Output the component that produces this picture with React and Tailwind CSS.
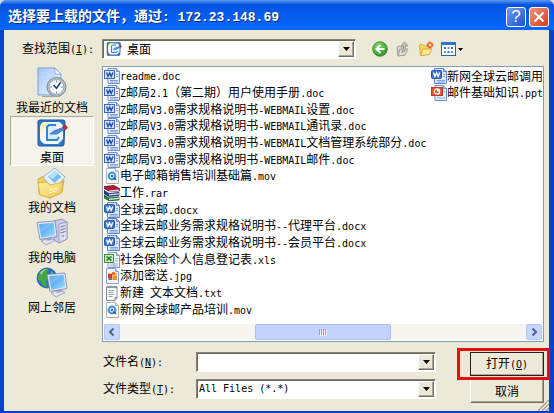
import React from "react";

/* ---------- text ---------- */

// Chinese glyphs are set at 12px and Latin ones at 10px, so that one is twice as wide as the other.
function Mixed({ text, latin = "font-['DejaVu_Sans_Mono',monospace] text-[10px]" }) {
  return text.split(/([\x20-\x7e]+)/).map((part, i) =>
    i % 2 ? (
      <span key={i} className={latin}>
        {part}
      </span>
    ) : (
      part
    )
  );
}

function Hotkey({ text, letter, colon }) {
  return (
    <>
      {text}
      <span className="font-['DejaVu_Sans_Mono',monospace] text-[10px]">
        (<u className="underline-offset-1">{letter}</u>){colon ? ":" : ""}
      </span>
    </>
  );
}

/* ---------- file icons ---------- */

function DocIcon() {
  return (
    <svg width="16" height="16" viewBox="0 0 16 16" aria-hidden="true">
      <path d="M4 .5h8.5l3 3v12H4z" fill="#e8f0fd" stroke="#6f8fd0" />
      <path d="M12.5.5v3h3" fill="#b9cdf2" stroke="#6f8fd0" />
      <path d="M12 6.5h2M12 8.5h2M6 12.5h8M6 14h8" stroke="#7f9fdc" />
      <rect x=".5" y="2.5" width="10" height="8" fill="#d5e4fb" stroke="#3f66b8" />
      <path d="M2.5 4.5l1.5 4 1.7-3.6 1.5 3.6 1.8-4" fill="none" stroke="#1f4fae" strokeWidth="1.4" />
    </svg>
  );
}

function DocxIcon() {
  return (
    <svg width="16" height="16" viewBox="0 0 16 16" aria-hidden="true">
      <path d="M3.5.5h9l3 3v12h-12z" fill="#dbe8fb" stroke="#5c83cc" />
      <path d="M12.5.5v3h3" fill="#a8c3ef" stroke="#5c83cc" />
      <path d="M6 12.5h8M6 14h8M12 6.5h2M12 8.5h2" stroke="#7ea2e0" />
      <rect x=".5" y="2.5" width="10" height="8" rx="1" fill="#3f73c9" stroke="#2d58a8" />
      <path d="M2.5 4.5l1.4 4 1.7-3.8 1.6 3.8 1.5-4" fill="none" stroke="#fff" strokeWidth="1.3" />
    </svg>
  );
}

function XlsIcon() {
  return (
    <svg width="16" height="16" viewBox="0 0 16 16" aria-hidden="true">
      <path d="M4 .5h8.5l3 3v12H4z" fill="#eef5fb" stroke="#7f9cc8" />
      <path d="M12.5.5v3h3" fill="#c4d6ee" stroke="#7f9cc8" />
      <path d="M11 6.5h3M11 9h3M6 12h8M6 14h8M10 11v4" stroke="#9ab5d8" />
      <rect x=".5" y="2.5" width="9" height="8" fill="#d4efcb" stroke="#3a8f35" />
      <path d="M2.5 4.3l5 4.4M7.5 4.3l-5 4.4" stroke="#2b8526" strokeWidth="1.6" />
    </svg>
  );
}

function PptIcon() {
  return (
    <svg width="16" height="16" viewBox="0 0 16 16" aria-hidden="true">
      <path d="M4 .5h8.5l3 3v12H4z" fill="#e6eefb" stroke="#6f8fd0" />
      <path d="M12.5.5v3h3" fill="#b9cdf2" stroke="#6f8fd0" />
      <path d="M12.5 6.5H14M6 13h8" stroke="#8ba8dd" />
      <rect x=".5" y="2.5" width="11" height="8" fill="#e2533a" stroke="#c03a28" />
      <circle cx="6" cy="6.5" r="2.6" fill="none" stroke="#fff" strokeWidth="1.3" />
      <path d="M6 6.5V4h2.5v2.5z" fill="#fff" />
    </svg>
  );
}

function MovIcon() {
  return (
    <svg width="16" height="16" viewBox="0 0 16 16" aria-hidden="true">
      <path d="M2.5.5h9l3 3v12h-12z" fill="#fbfbf8" stroke="#b3b3ab" />
      <path d="M11.5.5v3h3" fill="#ddd" stroke="#b3b3ab" />
      <circle cx="8" cy="8" r="3.4" fill="#d8efff" stroke="#3c8fdc" strokeWidth="2" />
      <circle cx="8" cy="8" r="1.2" fill="#2564b4" />
      <path d="M9.5 9.5l2.5 2.3" stroke="#2564b4" strokeWidth="1.8" />
      <path d="M3 15.5h11.5" stroke="#cf9a83" />
    </svg>
  );
}

function RarIcon() {
  return (
    <svg width="16" height="16" viewBox="0 0 16 16" aria-hidden="true">
      <path d="M0 1.500l10-1 5.500 3v2.500l-10 .5L0 3.500z" fill="#a81c3c" stroke="#541024" strokeWidth=".7" />
      <path d="M5 5.500l10-1v1.300L5 6.700z" fill="#f3dfe4" />
      <path d="M0 5.500l5 3 10-1v3l-10 1-5-3z" fill="#243f9c" stroke="#101c48" strokeWidth=".7" />
      <path d="M5 9.300l10-1v1.200l-10 1z" fill="#dfe6fa" />
      <path d="M0 10l5 3 10-1v3l-10 .8-5-3z" fill="#23863a" stroke="#0e3c17" strokeWidth=".7" />
      <path d="M5 13.700l10-1v1.200l-10 1z" fill="#dcf3df" />
    </svg>
  );
}

function JpgIcon() {
  return (
    <svg width="16" height="16" viewBox="0 0 16 16" aria-hidden="true">
      <path d="M2.5.5h9l3 3v12h-12z" fill="#f4f7fd" stroke="#8ba3cf" />
      <path d="M11.5.5v3h3" fill="#cbd8ee" stroke="#8ba3cf" />
      <rect x="4" y="5" width="9" height="7" fill="#f4b183" />
      <rect x="4" y="6" width="4" height="4" fill="#d23a22" />
      <rect x="8" y="4" width="3" height="3" fill="#e8742c" />
      <rect x="9" y="8" width="4" height="4" fill="#f0912e" />
      <rect x="5" y="10" width="3" height="2" fill="#4b78c8" />
    </svg>
  );
}

function TxtIcon() {
  return (
    <svg width="16" height="16" viewBox="0 0 16 16" aria-hidden="true">
      <path d="M2.5 2H13v11l-2 2.5H2.5z" fill="#fdfdfb" stroke="#7d8794" />
      <path d="M4 .8v2.4M6 .8v2.4M8 .8v2.4M10 .8v2.4M12 .8v2.4" stroke="#5b6571" strokeWidth=".9" />
      <path d="M4.5 5.5h6M4.5 7.5h5M4.5 9.5h6M4.5 11.5h4" stroke="#8fa0b6" />
      <path d="M11 15v-2.5h2" fill="#ccd" stroke="#7d8794" />
    </svg>
  );
}

/* ---------- large place icons ---------- */

function Screen({ x, y }) {
  return (
    <g transform={`translate(${x} ${y})`}>
      <path d="M4 20l9-3.5 5 3-9 4.500z" fill="#e4e4f2" stroke="#8686b0" strokeWidth=".7" />
      <path d="M8 16l6-1 1 4-5 1z" fill="#a3a4cc" />
      <path d="M0 1.500L18 0l2 15.500L3 18.500z" fill="#e4e8f6" stroke="#7783b4" strokeWidth=".8" />
      <path d="M2 3.200L16.500 1.800l1.700 12.500L4.300 16.800z" fill="url(#screenGlow)" />
      <path d="M2 3.200L16.500 1.800 3.500 12z" fill="#fff" opacity=".2" />
    </g>
  );
}

function RecentIcon() {
  return (
    <svg width="32" height="32" viewBox="0 0 32 32" aria-hidden="true">
      <path d="M2 1h17l6 6v21H2z" fill="url(#paper)" stroke="#7d9fd8" />
      <path d="M19 1v6h6z" fill="#fff" stroke="#7d9fd8" strokeWidth=".8" />
      <path d="M5 6h9M5 10h7M5 14h5" stroke="#c3d8f8" />
      <circle cx="20.5" cy="20" r="9.5" fill="#b8bfc9" stroke="#7c8591" />
      <circle cx="20.5" cy="20" r="7.3" fill="#f6fbff" stroke="#8c97a5" strokeWidth=".7" />
      <path d="M20.5 13.5v2M20.5 24.5v2M14 20h2M25 20h2" stroke="#7387a2" />
      <path d="M17.5 18l3 3.2 4.2-6" fill="none" stroke="#243b66" strokeWidth="1.5" />
      <path d="M6 29.5h18" stroke="#a9a796" />
    </svg>
  );
}

function DesktopIcon({ size = 32 }) {
  return (
    <svg width={size} height={size} viewBox="0 0 32 32" aria-hidden="true">
      <path d="M4 3h23q2 0 2 2l-1 22q0 2-2 2H4q-2 0-2-2L2 5q0-2 2-2z" fill="#2c78c8" stroke="#1b559e" />
      <path d="M8 5h15q4 2 4 5v12l-5 5H9q-5-2-5-6V10q1-4 4-5z" fill="#f5f8fa" />
      <path d="M8 5h8L4 17v-7q1-4 4-5z" fill="#fdf3c4" />
      <path d="M20 8h-7l-2 2v13h10l2-3" fill="#d8edff" stroke="#2d86d8" strokeWidth="2" />
      <path d="M14 17l4-3 10-4 1.5 2-9 5z" fill="#4f94d8" stroke="#255b9e" strokeWidth=".7" />
      <path d="M27 9.5l3-1 1.5 2.5-3 2z" fill="#c62f2b" stroke="#8c1a18" strokeWidth=".6" />
    </svg>
  );
}

function DocumentsIcon() {
  return (
    <svg width="32" height="32" viewBox="0 0 32 32" aria-hidden="true">
      <path d="M2 12l6-3 4 3 16 1-2 12-12 6-11-4z" fill="#f3cf58" stroke="#cda134" strokeWidth=".8" />
      <path d="M7 10L19 1l10 9-11 13z" fill="#e3f2ff" stroke="#7fa9d6" strokeWidth=".8" />
      <path d="M12 9.500l7-5.500 6.500 6-7 6z" fill="#7dbcec" />
      <path d="M12 9.500l7-5.500 3 2.800-5 5z" fill="#b8e0fa" />
      <path d="M2 16l9-1 3 3 13-3-2 11-11 5-10-3z" fill="url(#folder)" stroke="#d6aa3a" strokeWidth=".8" />
      <path d="M13 23l9-2M13 26l8-2.500" stroke="#fffbe0" />
    </svg>
  );
}

function ComputerIcon() {
  return (
    <svg width="32" height="32" viewBox="0 0 32 32" aria-hidden="true">
      <path d="M18 4l8-2 5 3v17l-8 4-5-3z" fill="#c9c9e4" stroke="#8383b0" strokeWidth=".8" />
      <path d="M23 7l8-2v17l-8 4z" fill="#dedef0" stroke="#8f8fba" strokeWidth=".8" />
      <path d="M24.5 10l5-1.500M24.5 13l5-1.500M24.5 16l5-1.500" stroke="#7272a6" />
      <circle cx="27" cy="19" r="1" fill="#58b158" />
      <Screen x={1} y={4} />
    </svg>
  );
}

function NetworkIcon() {
  return (
    <svg width="32" height="32" viewBox="0 0 32 32" aria-hidden="true">
      <circle cx="11" cy="11" r="10" fill="#2870cc" stroke="#1d4e96" strokeWidth=".7" />
      <path d="M5 4q4-3 8-2l-2 4 3 3-4 5 1 6q-5 0-6-5L2 13q-1-5 3-9z" fill="#43a844" />
      <path d="M15 4q4 3 4 8l-4-2z" fill="#61c05a" />
      <path d="M4 6q3-4 7-4-5 2-5 6z" fill="#c9f1c4" opacity=".7" />
      <Screen x={11} y={6} />
    </svg>
  );
}

function SharedPaints() {
  return (
    <svg width="0" height="0" className="absolute" aria-hidden="true">
      <defs>
        <linearGradient id="paper" x1="0" y1="0" x2="1" y2="1">
          <stop offset="0" stopColor="#9fc4f8" />
          <stop offset="1" stopColor="#f2f8ff" />
        </linearGradient>
        <linearGradient id="screenGlow" x1="0" y1="0" x2="1" y2="1">
          <stop offset="0" stopColor="#2f8fe8" />
          <stop offset="1" stopColor="#a4e2ff" />
        </linearGradient>
        <linearGradient id="folder" x1="0" y1="0" x2="1" y2="1">
          <stop offset="0" stopColor="#fff3a8" />
          <stop offset="1" stopColor="#f2c544" />
        </linearGradient>
        <radialGradient id="greenBall" cx=".4" cy=".3" r=".8">
          <stop offset="0" stopColor="#8fdc6c" />
          <stop offset="1" stopColor="#208a1c" />
        </radialGradient>
      </defs>
    </svg>
  );
}

/* ---------- toolbar icons ---------- */

function BackIcon() {
  return (
    <svg width="16" height="16" viewBox="0 0 16 16" aria-hidden="true">
      <circle cx="8" cy="8" r="7.3" fill="url(#greenBall)" stroke="#2f8a2a" strokeWidth=".8" />
      <path d="M8.5 4L4.5 8l4 4M5 8h7.5" fill="none" stroke="#fff" strokeWidth="2.1" />
    </svg>
  );
}

function UpIcon() {
  return (
    <svg width="16" height="16" viewBox="0 0 16 16" aria-hidden="true">
      <path d="M2 6l3-1 1 1h4v8l-7 1z" fill="#d3d2c8" stroke="#a3a298" />
      <path d="M3 15l2-7h8l-3 6z" fill="#e0dfd5" stroke="#a3a298" />
      <path d="M7 11.5q3.500-.5 3.500-4V5H13L9.500.8 6 5h2.500v2.500q0 2-1.500 2z" fill="#c2c1b8" stroke="#92918a" strokeWidth=".8" />
    </svg>
  );
}

function NewFolderIcon() {
  return (
    <svg width="16" height="16" viewBox="0 0 16 16" aria-hidden="true">
      <path d="M1.5 4l3-.5L6 5h5v8l-8.500 1.500z" fill="#fbd768" stroke="#e0a73a" />
      <path d="M2.5 14.5L5 8h9l-3 5.5z" fill="#ffec9c" stroke="#e0a73a" />
      <circle cx="12" cy="4" r="2.2" fill="#ffd9a0" stroke="#e8642c" strokeWidth="1.6" />
      <path d="M12 .3v1.500M12 6.200v1.500M8.300 4h1.500M14.200 4h1.500" stroke="#e8642c" />
    </svg>
  );
}

function ViewsIcon() {
  return (
    <svg width="16" height="16" viewBox="0 0 16 16" aria-hidden="true">
      <rect x=".5" y="1.5" width="14" height="13" fill="#fff" stroke="#2560b4" />
      <path d="M0 1h15v3H0z" fill="#2c72d0" />
      <path d="M3 6h2v2H3zM10 6h2v2h-2zM6.500 10h2v2h-2z" fill="#4667a8" />
      <path d="M6.500 6h2v2h-2zM3 10h2v2H3zM10 10h2v2h-2z" fill="#6e93cc" />
    </svg>
  );
}

/* ---------- controls ---------- */

const sunken =
  "border border-t-[#858375] border-l-[#858375] border-r-white border-b-white bg-white shadow-[inset_1px_1px_0_#6b695c]";
const raised =
  "border border-t-white border-l-white border-r-[#716f64] border-b-[#716f64] bg-[#ece9d8] shadow-[inset_-1px_-1px_0_#aca899]";

function DownArrow() {
  return (
    <svg width="7" height="4" viewBox="0 0 7 4" aria-hidden="true">
      <path d="M0 0h7L3.500 4z" fill="#000" />
    </svg>
  );
}

function ArrowBox() {
  return (
    <span className={"pointer-events-none absolute inset-y-[2px] right-[2px] flex w-4 items-center justify-center " + raised}>
      <DownArrow />
    </span>
  );
}

function ScrollButton({ label, path }) {
  return (
    <button aria-label={label} className="flex w-4 items-center justify-center rounded-[2px] border border-[#b4c8f6] bg-[#c6d6fc]">
      <svg width="8" height="8" viewBox="0 0 8 8" aria-hidden="true">
        <path d={path} fill="none" stroke="#4d6185" strokeWidth="2" />
      </svg>
    </button>
  );
}

/* ---------- data ---------- */

const places = [
  ["我最近的文档", RecentIcon],
  ["桌面", DesktopIcon],
  ["我的文档", DocumentsIcon],
  ["我的电脑", ComputerIcon],
  ["网上邻居", NetworkIcon],
];

const files = [
  ["readme.doc", DocIcon],
  ["Z邮局2.1（第二期）用户使用手册.doc", DocIcon],
  ["Z邮局V3.0需求规格说明书-WEBMAIL设置.doc", DocIcon],
  ["Z邮局V3.0需求规格说明书-WEBMAIL通讯录.doc", DocIcon],
  ["Z邮局V3.0需求规格说明书-WEBMAIL文档管理系统部分.doc", DocIcon],
  ["Z邮局V3.0需求规格说明书-WEBMAIL邮件.doc", DocIcon],
  ["电子邮箱销售培训基础篇.mov", MovIcon],
  ["工作.rar", RarIcon],
  ["全球云邮.docx", DocxIcon],
  ["全球云邮业务需求规格说明书--代理平台.docx", DocxIcon],
  ["全球云邮业务需求规格说明书--会员平台.docx", DocxIcon],
  ["社会保险个人信息登记表.xls", XlsIcon],
  ["添加密送.jpg", JpgIcon],
  ["新建 文本文档.txt", TxtIcon],
  ["新网全球邮产品培训.mov", MovIcon],
  ["新网全球云邮调用", DocxIcon],
  ["邮件基础知识.ppt", PptIcon],
];

/* ---------- window ---------- */

function TitleBar() {
  return (
    <header className="flex h-[30px] items-center gap-[3px] bg-linear-to-b from-[#5a9cf0] from-0% via-[#0453e0] via-15% to-[#0566fb] to-85% pt-[3px] pr-[5px] pl-2 text-white">
      <h1 className="flex-1 truncate text-[14px] leading-6 font-bold [text-shadow:1px_1px_0_#0a2a80]">
        <Mixed text="选择要上载的文件，通过: 172.23.148.69" latin="font-['Liberation_Mono',monospace] text-[13px]" />
      </h1>
      <button aria-label="帮助" className="flex size-5 items-center justify-center rounded-[3px] border border-white bg-linear-to-br from-[#6f9bf5] to-[#1d4fd0] font-['Liberation_Sans',sans-serif] text-[17px] leading-4">
        ?
      </button>
      <button aria-label="关闭" className="flex size-5 items-center justify-center rounded-[3px] border border-white bg-linear-to-br from-[#f0947a] to-[#cf3a12]">
        <svg width="12" height="12" viewBox="0 0 12 12" aria-hidden="true">
          <path d="M1.500 1.500l9 9M10.500 1.500l-9 9" stroke="#fff" strokeWidth="2" />
        </svg>
      </button>
    </header>
  );
}

function Toolbar() {
  return (
    <div className="flex h-5 items-center pl-[18px]">
      <label htmlFor="look" className="w-20 whitespace-nowrap">
        <Hotkey text="查找范围" letter="I" colon />
      </label>
      <div className="relative flex-1">
        <select id="look" className={"block h-5 w-full appearance-none pl-6 outline-none " + sunken}>
          <option>桌面</option>
        </select>
        <span className="pointer-events-none absolute top-[2px] left-1">
          <DesktopIcon size={16} />
        </span>
        <ArrowBox />
      </div>
      <div className="flex w-[188px] items-center gap-[7px] pl-4">
        <button aria-label="后退"><BackIcon /></button>
        <button aria-label="向上一级"><UpIcon /></button>
        <button aria-label="新建文件夹"><NewFolderIcon /></button>
        <button aria-label="查看" className="flex items-center gap-px">
          <ViewsIcon />
          <svg width="5" height="3" viewBox="0 0 5 3" aria-hidden="true">
            <path d="M0 0h5L2.500 3z" fill="#000" />
          </svg>
        </button>
      </div>
    </div>
  );
}

function Places() {
  return (
    <nav className="flex w-[98px] flex-col pr-2 pl-[6px]">
      {places.map(([name, Icon]) => (
        <button
          key={name}
          className={
            "flex h-[50px] flex-col items-center border whitespace-nowrap leading-4 " +
            (name === "桌面"
              ? "border-t-[#aca899] border-r-white border-b-white border-l-[#aca899] bg-[#f5f3ec]"
              : "border-transparent")
          }
        >
          <Icon />
          {name}
        </button>
      ))}
    </nav>
  );
}

function FileList() {
  return (
    <section className="flex h-[276px] flex-col border border-[#7f9db9] bg-white py-px pl-px">
      <ul className="grid h-[250px] grid-flow-col grid-cols-[327px_minmax(0,1fr)] grid-rows-[repeat(15,minmax(0,1fr))] overflow-hidden">
        {files.map(([name, Icon]) => (
          <li key={name} className="flex items-center leading-4 whitespace-nowrap">
            <span className="shrink-0">
              <Icon />
            </span>
            <span className="whitespace-pre">
              <Mixed text={name} />
            </span>
          </li>
        ))}
      </ul>
      <div className="mt-auto mr-px flex h-4 bg-[#f6f5f0]">
        <ScrollButton label="向左滚动" path="M5.500 .5L2 4l3.500 3.500" />
        <div className="flex flex-1">
          <span className="w-1/3" />
          <span className="flex w-1/3 items-center justify-center gap-px rounded-[2px] border border-[#a9bdf0] bg-[#c3d3fb]">
            {[0, 1, 2, 3].map((n) => (
              <i key={n} className="h-[6px] w-px bg-[#8ca4e0] shadow-[1px_1px_0_#edf2fe]" />
            ))}
          </span>
        </div>
        <ScrollButton label="向右滚动" path="M2.500 .5L6 4 2.500 7.500" />
      </div>
    </section>
  );
}

function Fields() {
  const button = "h-6 w-full " + raised;
  return (
    <form className="mt-[10px] flex gap-[34px]" onSubmit={(e) => e.preventDefault()}>
      <div className="grid flex-1 grid-cols-[94px_minmax(0,1fr)] content-start items-center gap-y-[7px]">
        <label htmlFor="name" className="pl-px">
          <Hotkey text="文件名" letter="N" colon />
        </label>
        <div className="relative">
          <input id="name" className={"block h-5 w-full px-[3px] outline-none " + sunken} />
          <ArrowBox />
        </div>
        <label htmlFor="type" className="pl-px">
          <Hotkey text="文件类型" letter="T" colon />
        </label>
        <div className="relative">
          <select
            id="type"
            className={"block h-5 w-full appearance-none px-[2px] font-['DejaVu_Sans_Mono',monospace] text-[10px] outline-none " + sunken}
          >
            <option>All Files (*.*)</option>
          </select>
          <ArrowBox />
        </div>
      </div>
      <div className="flex w-[74px] flex-col gap-[3px]">
        <div className="relative">
          <button type="submit" className={button + " outline-1 -outline-offset-1 outline-[#222]"}>
            <Hotkey text="打开" letter="O" />
          </button>
          <span className="pointer-events-none absolute -top-1 -right-[6px] -bottom-1 -left-[13px] border-3 border-[#e60f0f]" />
        </div>
        <button type="button" className={button}>
          取消
        </button>
      </div>
    </form>
  );
}

export default function App() {
  return (
    <div className="min-h-screen bg-[#cfd6e6] font-['Noto_Sans_CJK_SC',sans-serif] text-[12px] leading-4 text-black">
      <SharedPaints />
      <main className="flex min-h-screen flex-col overflow-hidden rounded-t-[7px] bg-[#0a3fd0]">
        <TitleBar />
        <div className="relative mr-[5px] mb-1 ml-1 flex flex-1 flex-col gap-[7px] bg-[#ece9d8] pt-[9px] pr-[5px] pb-2">
          <Toolbar />
          <div className="flex">
            <Places />
            <div className="min-w-0 flex-1">
              <FileList />
              <Fields />
            </div>
          </div>
          <svg className="absolute right-0 bottom-0" width="11" height="11" viewBox="0 0 11 11" aria-hidden="true">
            <path d="M0 11L11 0M4 11l7-7M8 11l3-3" stroke="#a09d8c" strokeWidth="1.500" />
            <path d="M1.500 11L11 1.500M5.500 11L11 5.500" stroke="#fff" strokeWidth=".8" />
          </svg>
        </div>
      </main>
    </div>
  );
}
